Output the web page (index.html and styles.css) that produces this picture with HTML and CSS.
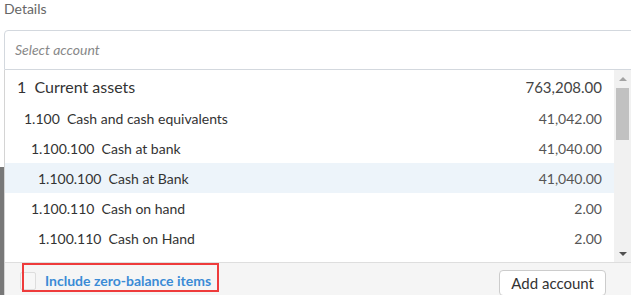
FILE: index.html
```html
<!DOCTYPE html>
<html lang="en">
<head>
    <meta charset="UTF-8">
    <title>Details</title>
    <link rel="stylesheet" href="styles.css">
</head>
<body>
    <div class="edge"></div>
    <div class="field-label">Details</div>
    <div class="account-input">Select account</div>
    <div class="dropdown">
        <div class="list-area">
            <div class="rows">
                <div class="row level-1"><span>1&nbsp;&nbsp;Current assets</span><span class="amount">763,208.00</span></div>
                <div class="row level-2"><span>1.100&nbsp;&nbsp;Cash and cash equivalents</span><span class="amount">41,042.00</span></div>
                <div class="row level-3"><span>1.100.100&nbsp;&nbsp;Cash at bank</span><span class="amount">41,040.00</span></div>
                <div class="row level-4 active"><span>1.100.100&nbsp;&nbsp;Cash at Bank</span><span class="amount">41,040.00</span></div>
                <div class="row level-3"><span>1.100.110&nbsp;&nbsp;Cash on hand</span><span class="amount">2.00</span></div>
                <div class="row level-4"><span>1.100.110&nbsp;&nbsp;Cash on Hand</span><span class="amount">2.00</span></div>
            </div>
            <div class="scrollbar">
                <div class="arrow up"></div>
                <div class="track"><div class="thumb"></div></div>
                <div class="arrow down"></div>
            </div>
        </div>
        <div class="footer">
            <label class="zero-toggle">
                <span class="checkbox"></span>
                <span class="zero-text">Include zero-balance items</span>
            </label>
            <button class="add-btn">Add account</button>
            <div class="highlight-box"></div>
        </div>
    </div>
</body>
</html>
```

FILE: styles.css
```css
body {
    margin: 0;
    font-family: Lato, "Open Sans", sans-serif;
    background-color: #fff;
    color: #333;
    overflow: hidden;
    position: relative;
    height: 295px;
}
.edge {
    position: absolute;
    left: 0;
    top: 167px;
    width: 4px;
    bottom: 0;
    background-color: #787878;
}
.field-label {
    padding: 0 0 0 4px;
    height: 30px;
    line-height: 18px;
    font-size: 14px;
    color: #666;
}
.account-input {
    margin-left: 4px;
    width: calc(100% - 7px);
    height: 38px;
    line-height: 38px;
    border: 1px solid #d3d8de;
    border-radius: 4px 4px 0 0;
    padding-left: 10px;
    box-sizing: content-box;
    font-size: 14px;
    font-style: italic;
    color: #888;
}
.dropdown {
    margin-left: 4px;
    border-left: 1px solid #d4d4d4;
}
.list-area {
    display: flex;
    height: 192px;
    overflow: hidden;
}
.rows {
    flex: 1;
}
.row {
    display: flex;
    justify-content: space-between;
    align-items: center;
    height: 30px;
    padding-right: 12px;
    font-size: 14px;
    color: #333;
}
.row .amount {
    color: #555;
}
.level-1 {
    height: 33px;
    font-size: 16px;
    padding-left: 12px;
}
.level-1 .amount {
    font-size: 15px;
    color: #444;
}
.level-2 { padding-left: 19px; }
.level-3 { padding-left: 26px; }
.level-4 { padding-left: 33px; }
.active {
    background-color: #edf4fa;
}
.scrollbar {
    width: 17px;
    background-color: #f1f1f1;
    display: flex;
    flex-direction: column;
}
.arrow {
    height: 17px;
    display: flex;
    align-items: center;
    justify-content: center;
}
.arrow::after {
    content: "";
    border-left: 4px solid transparent;
    border-right: 4px solid transparent;
}
.arrow.up::after {
    border-bottom: 4px solid #a3a3a3;
}
.arrow.down::after {
    border-top: 4px solid #505050;
}
.track {
    flex: 1;
    padding: 1px 2px;
}
.thumb {
    height: 52px;
    background-color: #c1c1c1;
}
.footer {
    position: relative;
    display: flex;
    align-items: center;
    justify-content: space-between;
    height: 34px;
    border-top: 1px solid #dedede;
    background-color: #f5f5f5;
    padding: 0 25px 0 15px;
    box-sizing: border-box;
}
.zero-toggle {
    display: flex;
    align-items: center;
    gap: 9px;
    padding-top: 2px;
}
.checkbox {
    width: 14px;
    height: 16px;
    border: 1px solid #ddd;
    border-radius: 2px;
    background-color: #f7f7f7;
}
.zero-text {
    font-size: 14px;
    font-weight: bold;
    color: #3b8bd6;
}
.add-btn {
    font-family: inherit;
    font-size: 15px;
    color: #333;
    background-color: #fff;
    border: 1px solid #ccc;
    border-radius: 4px;
    height: 26px;
    padding: 0 11px;
    margin-top: 6px;
}
.highlight-box {
    position: absolute;
    left: 17px;
    top: 0;
    width: 193px;
    height: 25px;
    border: 2px solid #ee3b3b;
    pointer-events: none;
}
```
